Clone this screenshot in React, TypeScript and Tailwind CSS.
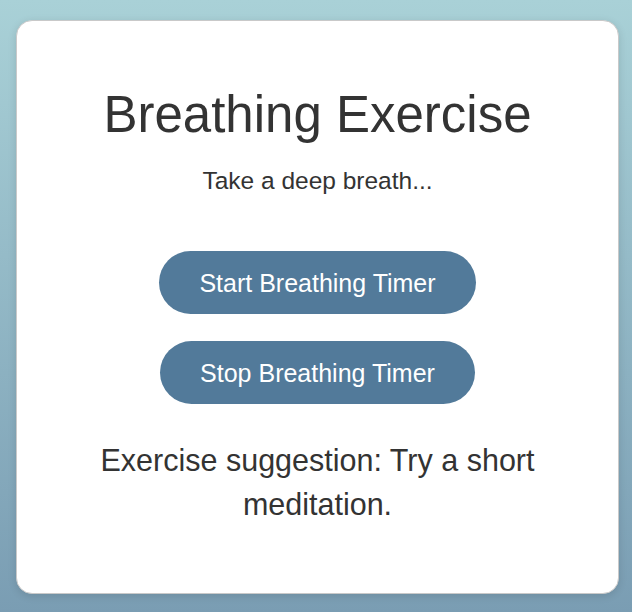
import React from "react";

export default function App() {
  return (
    <div
      className="min-h-screen w-full bg-gradient-to-b from-[#a9d1d7] to-[#7a9db3] pt-5 pb-[18px]"
      style={{ fontFamily: '"Liberation Sans", Arial, Helvetica, sans-serif' }}
    >
      <div className="ml-4 w-[603px] h-[574px] rounded-2xl border border-[#c9c9c9] bg-white shadow-[0_2px_8px_rgba(0,0,0,0.12)] px-10 pt-[66px] flex flex-col items-center text-center text-[#333333]">
        <h1 className="text-[51px] leading-[56px] font-normal">Breathing Exercise</h1>
        <p className="mt-[23px] text-[24.5px] leading-[30px]">Take a deep breath...</p>
        <button className="mt-[55px] h-[63px] px-10 rounded-full bg-[#527a9a] text-white text-[25px] leading-[30px]">
          Start Breathing Timer
        </button>
        <button className="mt-[27px] h-[63px] px-10 rounded-full bg-[#527a9a] text-white text-[25px] leading-[30px]">
          Stop Breathing Timer
        </button>
        <p className="mt-[34px] text-[30.5px] leading-[44px]">
          Exercise suggestion: Try a short meditation.
        </p>
      </div>
    </div>
  );
}
